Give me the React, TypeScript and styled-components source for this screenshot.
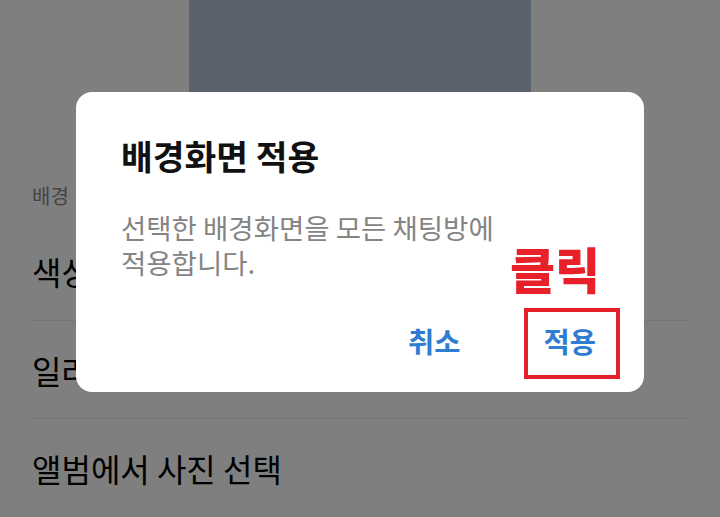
import React from "react";
import styled, { createGlobalStyle } from "styled-components";

const GlobalStyle = createGlobalStyle`
  html, body { margin: 0; padding: 0; background: #ffffff; }
  body { font-family: "Noto Sans CJK KR", "Noto Sans", sans-serif; overflow: hidden; }
  * { box-sizing: border-box; }
`;

const Page = styled.div`
  width: 720px;
  height: 517px;
  background: #ffffff;
  display: flex;
  flex-direction: column;
  overflow: hidden;
`;

const Preview = styled.div`
  align-self: center;
  width: 342px;
  height: 172px;
  flex: none;
  background: #b4c6da;
`;

const SectionLabel = styled.div`
  height: 50px;
  line-height: 48px;
  padding: 0 32px;
  font-size: 20px;
  color: #888888;
`;

const Row = styled.div<{ $divider?: boolean }>`
  height: 98px;
  flex: none;
  margin: 0 32px;
  display: flex;
  align-items: center;
  font-size: 32px;
  color: #000000;
  border-top: ${(p) => (p.$divider ? "1px solid #ececec" : "none")};
`;

const Overlay = styled.div`
  position: fixed;
  inset: 0;
  background: rgba(0, 0, 0, 0.5);
  display: flex;
  justify-content: center;
  align-items: flex-start;
  padding-top: 92px;
`;

const Dialog = styled.div`
  position: relative;
  width: 568px;
  height: 300px;
  background: #ffffff;
  border-radius: 16px;
  padding: 41px 0 0 45px;
  display: flex;
  flex-direction: column;
`;

const Title = styled.h2`
  margin: 0;
  font-size: 34.5px;
  line-height: 44px;
  font-weight: 700;
  color: #111111;
`;

const Body = styled.p`
  margin: 33px 0 0;
  font-size: 27.5px;
  line-height: 35px;
  font-weight: 400;
  color: #848484;
`;

const Actions = styled.div`
  position: absolute;
  right: 28px;
  bottom: 23px;
  display: flex;
  gap: 43px;
`;

const ActionButton = styled.button`
  border: none;
  background: none;
  padding: 10px 20px;
  font-family: inherit;
  font-size: 28.5px;
  line-height: 36px;
  font-weight: 700;
  color: #2f7dd2;
  cursor: pointer;
`;

const ClickNote = styled.span`
  position: absolute;
  left: 434px;
  top: 148px;
  font-size: 49px;
  line-height: 56px;
  font-weight: 900;
  color: #e8202a;
`;

const Highlight = styled.div`
  position: absolute;
  left: 448px;
  top: 216px;
  width: 96px;
  height: 71px;
  border: 4px solid #e3202a;
  pointer-events: none;
`;

export default function App() {
  return (
    <>
      <GlobalStyle />
      <Page>
        <Preview />
        <SectionLabel>배경</SectionLabel>
        <Row>색상</Row>
        <Row $divider>일러스트</Row>
        <Row $divider>앨범에서 사진 선택</Row>
      </Page>
      <Overlay>
        <Dialog>
          <Title>배경화면 적용</Title>
          <Body>
            선택한 배경화면을 모든 채팅방에
            <br />
            적용합니다.
          </Body>
          <Actions>
            <ActionButton>취소</ActionButton>
            <ActionButton>적용</ActionButton>
          </Actions>
          <ClickNote>클릭</ClickNote>
          <Highlight />
        </Dialog>
      </Overlay>
    </>
  );
}
